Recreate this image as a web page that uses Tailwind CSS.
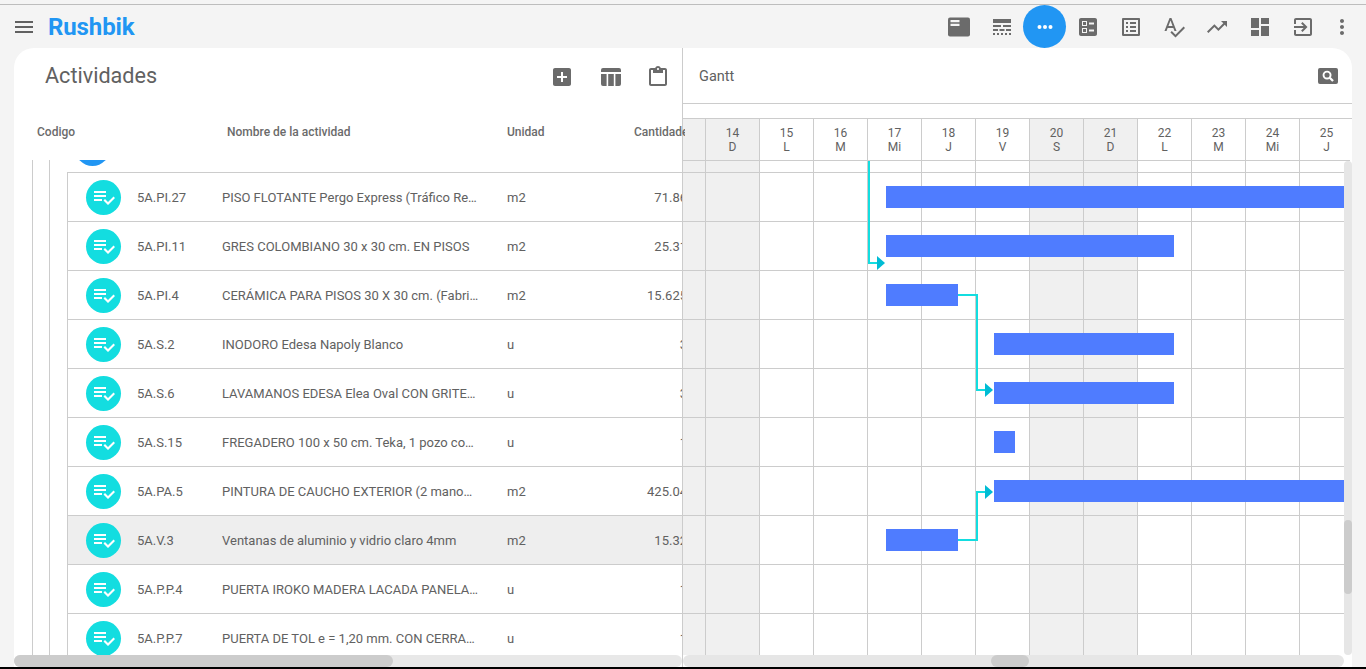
<!DOCTYPE html>
<html lang="es">
<head>
<meta charset="utf-8">
<title>Rushbik</title>
<script src="https://cdn.jsdelivr.net/npm/@tailwindcss/browser@4"></script>
</head>
<body class="w-[1366px] h-[669px] overflow-hidden bg-[#f4f4f4] font-['Roboto',sans-serif] text-[#616161] flex flex-col">
<div class="h-[5px] shrink-0 border-b border-[#bdbdbd]"></div>
<header class="h-[43px] shrink-0 flex items-center">
  <svg class="ml-3 w-6 h-6 fill-[#616161]" viewBox="0 0 24 24"><path d="M3 18h18v-2H3v2zm0-5h18v-2H3v2zm0-7v2h18V6H3z"/></svg>
  <div class="ml-3 text-[24px] leading-none font-bold text-[#2196f3] tracking-[-0.1px]">Rushbik</div>
  <div class="ml-auto flex items-center h-full pr-[8px]">
    <div class="w-[43px] h-[43px] flex items-center justify-center"><svg class="w-6 h-6" viewBox="0 0 24 24"><rect x="1" y="2.5" width="22" height="19" rx="2" fill="#6b6b6b"/><path d="M3.5 5h9v2.2h-9zM3.5 8.7h9v2.2h-9z" fill="#f4f4f4"/></svg></div>
    <div class="w-[43px] h-[43px] flex items-center justify-center"><svg class="w-6 h-6 fill-[#6b6b6b]" viewBox="0 0 24 24"><path d="M3 16h5v-2H3v2zm6.5 0h5v-2h-5v2zm6.5 0h5v-2h-5v2zM3 20h2v-2H3v2zm4 0h2v-2H7v2zm4 0h2v-2h-2v2zm4 0h2v-2h-2v2zm4 0h2v-2h-2v2zM3 12h8v-2H3v2zm10 0h8v-2h-8v2zM3 4v4h18V4H3z"/></svg></div>
    <div class="w-[43px] h-[43px] rounded-full bg-[#2196f3] flex items-center justify-center"><svg class="w-6 h-6 fill-white" viewBox="0 0 24 24"><circle cx="6.5" cy="12" r="2"/><circle cx="12" cy="12" r="2"/><circle cx="17.5" cy="12" r="2"/></svg></div>
    <div class="w-[43px] h-[43px] flex items-center justify-center"><svg class="w-6 h-6 fill-[#6b6b6b]" viewBox="0 0 24 24"><path d="M13 9.5h5v-2h-5v2zm0 7h5v-2h-5v2zm6 4.5H5c-1.1 0-2-.9-2-2V5c0-1.1.9-2 2-2h14c1.1 0 2 .9 2 2v14c0 1.1-.9 2-2 2zM6 11h5V6H6v5zm1-4h3v3H7V7zM6 18h5v-5H6v5zm1-4h3v3H7v-3z"/></svg></div>
    <div class="w-[43px] h-[43px] flex items-center justify-center"><svg class="w-6 h-6 fill-[#6b6b6b]" viewBox="0 0 24 24"><path d="M19 5v14H5V5h14m1.1-2H3.9c-.5 0-.9.4-.9.9v16.2c0 .4.4.9.9.9h16.2c.4 0 .9-.5.9-.9V3.9c0-.5-.5-.9-.9-.9zM11 7h6v2h-6V7zm0 4h6v2h-6v-2zm0 4h6v2h-6zM7 7h2v2H7zm0 4h2v2H7zm0 4h2v2H7z"/></svg></div>
    <div class="w-[43px] h-[43px] flex items-center justify-center"><svg class="w-6 h-6 fill-[#6b6b6b]" viewBox="0 0 24 24"><path d="M12.45 16h2.09L9.43 3H7.57L2.46 16h2.09l1.12-3h5.64l1.14 3zm-6.02-5L8.5 5.48 10.57 11H6.43zm15.16.59l-8.09 8.09L9.83 16l-1.41 1.41 5.09 5.09L23 13l-1.41-1.41z"/></svg></div>
    <div class="w-[43px] h-[43px] flex items-center justify-center"><svg class="w-6 h-6 fill-[#6b6b6b]" viewBox="0 0 24 24"><path d="M16 6l2.29 2.29-4.88 4.88-4-4L2 16.59 3.41 18l6-6 4 4 6.3-6.29L22 12V6z"/></svg></div>
    <div class="w-[43px] h-[43px] flex items-center justify-center"><svg class="w-6 h-6 fill-[#6b6b6b]" viewBox="0 0 24 24"><path d="M3 13h8V3H3v10zm0 8h8v-6H3v6zm10 0h8V11h-8v10zm0-18v6h8V3h-8z"/></svg></div>
    <div class="w-[43px] h-[43px] flex items-center justify-center"><svg class="w-6 h-6 fill-[#6b6b6b]" viewBox="0 0 24 24"><path d="M10.09 15.59L11.5 17l5-5-5-5-1.41 1.41L12.67 11H3v2h9.67l-2.58 2.59zM19 3H5c-1.11 0-2 .9-2 2v4h2V5h14v14H5v-4H3v4c0 1.1.89 2 2 2h14c1.1 0 2-.9 2-2V5c0-1.1-.9-2-2-2z"/></svg></div>
    <div class="w-[34px] h-[43px] pl-[2px] flex items-center justify-center"><svg class="w-6 h-6 fill-[#6b6b6b]" viewBox="0 0 24 24"><path d="M12 8c1.1 0 2-.9 2-2s-.9-2-2-2-2 .9-2 2 .9 2 2 2zm0 2c-1.1 0-2 .9-2 2s.9 2 2 2 2-.9 2-2-.9-2-2-2zm0 6c-1.1 0-2 .9-2 2s.9 2 2 2 2-.9 2-2-.9-2-2-2z"/></svg></div>
  </div>
</header>

<main class="mx-[14px] h-[619px] shrink-0 bg-white rounded-t-[20px] flex">
  <section class="w-[668px] shrink-0 flex flex-col relative z-10">
    <div class="h-[112px] shrink-0 w-[671px] overflow-hidden">
      <div class="h-[57px] flex items-center pl-[31px]">
        <h1 class="text-[21.6px] leading-none font-normal text-[#616161] pb-[2px]">Actividades</h1>
        <div class="ml-auto flex items-center mr-[15px]">
          <svg class="w-6 h-6 fill-[#6b6b6b]" viewBox="0 0 24 24"><path d="M19 3H5c-1.11 0-2 .9-2 2v14c0 1.1.89 2 2 2h14c1.1 0 2-.9 2-2V5c0-1.1-.9-2-2-2zm-2 10h-4v4h-2v-4H7v-2h4V7h2v4h4v2z"/></svg>
          <svg class="ml-[25px] w-6 h-6 fill-[#6b6b6b]" viewBox="0 0 24 24"><path d="M2 5a2 2 0 0 1 2-2h16a2 2 0 0 1 2 2v2H2zM2 9h5.6v12H4a2 2 0 0 1-2-2zM9.2 9h5.6v12H9.2zM16.4 9H22v10a2 2 0 0 1-2 2h-3.6z"/></svg>
          <svg class="ml-[23px] w-6 h-6 fill-[#6b6b6b]" viewBox="0 0 24 24"><path d="M19 3h-4.18C14.4 1.84 13.3 1 12 1c-1.3 0-2.4.84-2.82 2H5c-1.1 0-2 .9-2 2v14c0 1.1.9 2 2 2h14c1.1 0 2-.9 2-2V5c0-1.1-.9-2-2-2zm-7 0c.55 0 1 .45 1 1s-.45 1-1 1-1-.45-1-1 .45-1 1-1zm7 16H5V5h2v3h10V5h2v14z"/></svg>
        </div>
      </div>
      <div class="h-[55px] flex items-start pt-[20px] text-[12px] leading-[14px] font-medium text-[#6b6b6b] whitespace-nowrap">
        <div class="ml-[23px] w-[190px] shrink-0">Codigo</div>
        <div class="w-[280px] shrink-0">Nombre de la actividad</div>
        <div class="w-[127px] shrink-0">Unidad</div>
        <div class="shrink-0">Cantidades</div>
      </div>
    </div>
    <div class="h-[495px] shrink-0 overflow-hidden">
      <div class="ml-[18px] h-full border-l border-[#ccc] pl-[16px]">
        <div class="h-full border-l border-[#ccc] pl-[17px]">
          <div class="h-[12px] overflow-hidden">
            <div class="ml-[8px] -mt-[29px] w-[35px] h-[35px] rounded-full bg-[#2196f3]"></div>
          </div>
          <div class="w-[640px] border-l border-t border-[#ccc] text-[13px] text-[#616161] whitespace-nowrap">
            <div class="h-[49px] border-b border-[#ccc] flex items-center">
              <span class="ml-[18px] w-[35px] h-[35px] rounded-full bg-[#13dde0] flex items-center justify-center shrink-0"><svg class="w-6 h-6 fill-white" viewBox="0 0 24 24"><path d="M14 10H2v2h12v-2zm0-4H2v2h12V6zM2 16h8v-2H2v2zm19.5-4.5L23 13l-6.99 7-4.51-4.5L13 14l3.01 3 5.49-5.5z"/></svg></span>
              <span class="pt-[2px] ml-4 w-[85px] shrink-0">5A.PI.27</span><span class="pt-[2px] w-[285px] shrink-0">PISO FLOTANTE Pergo Express (Tráfico Re…</span><span class="pt-[2px] w-[100px] shrink-0">m2</span><span class="pt-[2px] w-[80px] shrink-0 text-right">71.86</span>
            </div>
            <div class="h-[49px] border-b border-[#ccc] flex items-center">
              <span class="ml-[18px] w-[35px] h-[35px] rounded-full bg-[#13dde0] flex items-center justify-center shrink-0"><svg class="w-6 h-6 fill-white" viewBox="0 0 24 24"><path d="M14 10H2v2h12v-2zm0-4H2v2h12V6zM2 16h8v-2H2v2zm19.5-4.5L23 13l-6.99 7-4.51-4.5L13 14l3.01 3 5.49-5.5z"/></svg></span>
              <span class="pt-[2px] ml-4 w-[85px] shrink-0">5A.PI.11</span><span class="pt-[2px] w-[285px] shrink-0">GRES COLOMBIANO 30 x 30 cm. EN PISOS</span><span class="pt-[2px] w-[100px] shrink-0">m2</span><span class="pt-[2px] w-[80px] shrink-0 text-right">25.31</span>
            </div>
            <div class="h-[49px] border-b border-[#ccc] flex items-center">
              <span class="ml-[18px] w-[35px] h-[35px] rounded-full bg-[#13dde0] flex items-center justify-center shrink-0"><svg class="w-6 h-6 fill-white" viewBox="0 0 24 24"><path d="M14 10H2v2h12v-2zm0-4H2v2h12V6zM2 16h8v-2H2v2zm19.5-4.5L23 13l-6.99 7-4.51-4.5L13 14l3.01 3 5.49-5.5z"/></svg></span>
              <span class="pt-[2px] ml-4 w-[85px] shrink-0">5A.PI.4</span><span class="pt-[2px] w-[285px] shrink-0">CERÁMICA PARA PISOS 30 X 30 cm. (Fabri…</span><span class="pt-[2px] w-[100px] shrink-0">m2</span><span class="pt-[2px] w-[80px] shrink-0 text-right">15.625</span>
            </div>
            <div class="h-[49px] border-b border-[#ccc] flex items-center">
              <span class="ml-[18px] w-[35px] h-[35px] rounded-full bg-[#13dde0] flex items-center justify-center shrink-0"><svg class="w-6 h-6 fill-white" viewBox="0 0 24 24"><path d="M14 10H2v2h12v-2zm0-4H2v2h12V6zM2 16h8v-2H2v2zm19.5-4.5L23 13l-6.99 7-4.51-4.5L13 14l3.01 3 5.49-5.5z"/></svg></span>
              <span class="pt-[2px] ml-4 w-[85px] shrink-0">5A.S.2</span><span class="pt-[2px] w-[285px] shrink-0">INODORO Edesa Napoly Blanco</span><span class="pt-[2px] w-[100px] shrink-0">u</span><span class="pt-[2px] w-[80px] shrink-0 text-right">3</span>
            </div>
            <div class="h-[49px] border-b border-[#ccc] flex items-center">
              <span class="ml-[18px] w-[35px] h-[35px] rounded-full bg-[#13dde0] flex items-center justify-center shrink-0"><svg class="w-6 h-6 fill-white" viewBox="0 0 24 24"><path d="M14 10H2v2h12v-2zm0-4H2v2h12V6zM2 16h8v-2H2v2zm19.5-4.5L23 13l-6.99 7-4.51-4.5L13 14l3.01 3 5.49-5.5z"/></svg></span>
              <span class="pt-[2px] ml-4 w-[85px] shrink-0">5A.S.6</span><span class="pt-[2px] w-[285px] shrink-0">LAVAMANOS EDESA Elea Oval CON GRITE…</span><span class="pt-[2px] w-[100px] shrink-0">u</span><span class="pt-[2px] w-[80px] shrink-0 text-right">3</span>
            </div>
            <div class="h-[49px] border-b border-[#ccc] flex items-center">
              <span class="ml-[18px] w-[35px] h-[35px] rounded-full bg-[#13dde0] flex items-center justify-center shrink-0"><svg class="w-6 h-6 fill-white" viewBox="0 0 24 24"><path d="M14 10H2v2h12v-2zm0-4H2v2h12V6zM2 16h8v-2H2v2zm19.5-4.5L23 13l-6.99 7-4.51-4.5L13 14l3.01 3 5.49-5.5z"/></svg></span>
              <span class="pt-[2px] ml-4 w-[85px] shrink-0">5A.S.15</span><span class="pt-[2px] w-[285px] shrink-0">FREGADERO 100 x 50 cm. Teka, 1 pozo co…</span><span class="pt-[2px] w-[100px] shrink-0">u</span><span class="pt-[2px] w-[80px] shrink-0 text-right">1</span>
            </div>
            <div class="h-[49px] border-b border-[#ccc] flex items-center">
              <span class="ml-[18px] w-[35px] h-[35px] rounded-full bg-[#13dde0] flex items-center justify-center shrink-0"><svg class="w-6 h-6 fill-white" viewBox="0 0 24 24"><path d="M14 10H2v2h12v-2zm0-4H2v2h12V6zM2 16h8v-2H2v2zm19.5-4.5L23 13l-6.99 7-4.51-4.5L13 14l3.01 3 5.49-5.5z"/></svg></span>
              <span class="pt-[2px] ml-4 w-[85px] shrink-0">5A.PA.5</span><span class="pt-[2px] w-[285px] shrink-0">PINTURA DE CAUCHO EXTERIOR (2 mano…</span><span class="pt-[2px] w-[100px] shrink-0">m2</span><span class="pt-[2px] w-[80px] shrink-0 text-right">425.04</span>
            </div>
            <div class="h-[49px] border-b border-[#ccc] flex items-center bg-[#eeeeee]">
              <span class="ml-[18px] w-[35px] h-[35px] rounded-full bg-[#13dde0] flex items-center justify-center shrink-0"><svg class="w-6 h-6 fill-white" viewBox="0 0 24 24"><path d="M14 10H2v2h12v-2zm0-4H2v2h12V6zM2 16h8v-2H2v2zm19.5-4.5L23 13l-6.99 7-4.51-4.5L13 14l3.01 3 5.49-5.5z"/></svg></span>
              <span class="pt-[2px] ml-4 w-[85px] shrink-0">5A.V.3</span><span class="pt-[2px] w-[285px] shrink-0">Ventanas de aluminio y vidrio claro 4mm</span><span class="pt-[2px] w-[100px] shrink-0">m2</span><span class="pt-[2px] w-[80px] shrink-0 text-right">15.32</span>
            </div>
            <div class="h-[49px] border-b border-[#ccc] flex items-center">
              <span class="ml-[18px] w-[35px] h-[35px] rounded-full bg-[#13dde0] flex items-center justify-center shrink-0"><svg class="w-6 h-6 fill-white" viewBox="0 0 24 24"><path d="M14 10H2v2h12v-2zm0-4H2v2h12V6zM2 16h8v-2H2v2zm19.5-4.5L23 13l-6.99 7-4.51-4.5L13 14l3.01 3 5.49-5.5z"/></svg></span>
              <span class="pt-[2px] ml-4 w-[85px] shrink-0">5A.P.P.4</span><span class="pt-[2px] w-[285px] shrink-0">PUERTA IROKO MADERA LACADA PANELA…</span><span class="pt-[2px] w-[100px] shrink-0">u</span><span class="pt-[2px] w-[80px] shrink-0 text-right">1</span>
            </div>
            <div class="h-[49px] border-b border-[#ccc] flex items-center">
              <span class="ml-[18px] w-[35px] h-[35px] rounded-full bg-[#13dde0] flex items-center justify-center shrink-0"><svg class="w-6 h-6 fill-white" viewBox="0 0 24 24"><path d="M14 10H2v2h12v-2zm0-4H2v2h12V6zM2 16h8v-2H2v2zm19.5-4.5L23 13l-6.99 7-4.51-4.5L13 14l3.01 3 5.49-5.5z"/></svg></span>
              <span class="pt-[2px] ml-4 w-[85px] shrink-0">5A.P.P.7</span><span class="pt-[2px] w-[285px] shrink-0">PUERTA DE TOL e = 1,20 mm. CON CERRA…</span><span class="pt-[2px] w-[100px] shrink-0">u</span><span class="pt-[2px] w-[80px] shrink-0 text-right">1</span>
            </div>
          </div>
        </div>
      </div>
    </div>
    <div class="h-3 shrink-0 bg-[#e8e8e8] rounded-full"><div class="w-[379px] h-full rounded-full bg-[#cccccc]"></div></div>
  </section>

  <section class="w-[670px] shrink-0 border-l border-[#ccc] flex flex-col">
    <div class="h-[56px] shrink-0 border-b border-[#ccc] flex items-center pl-4 pr-[14px] text-[14.5px]">
      <span class="pt-[2px]">Gantt</span>
      <svg class="ml-auto w-[20px] h-[16px]" viewBox="0 0 21 17" preserveAspectRatio="none"><rect width="21" height="17" rx="2" fill="#6b6b6b"/><circle cx="9.5" cy="7.5" r="3.7" fill="none" stroke="#fff" stroke-width="2"/><path d="M12.3 10.3l3.5 3.5" stroke="#fff" stroke-width="2.4"/></svg>
    </div>
    <div class="h-[15px] shrink-0 border-b border-[#ccc]"></div>
    <div class="h-[42px] shrink-0 w-[667px] border-b border-[#ccc] overflow-hidden flex text-[12px] leading-[14px] text-center text-[#616161]">
      <div class="w-[23px] shrink-0 border-r border-[#ccc] bg-[#f0f0f0]"></div>
      <div class="w-[54px] shrink-0 border-r border-[#ccc] bg-[#f0f0f0] pt-[7px]">14<br>D</div>
      <div class="w-[54px] shrink-0 border-r border-[#ccc] pt-[7px]">15<br>L</div>
      <div class="w-[54px] shrink-0 border-r border-[#ccc] pt-[7px]">16<br>M</div>
      <div class="w-[54px] shrink-0 border-r border-[#ccc] pt-[7px]">17<br>Mi</div>
      <div class="w-[54px] shrink-0 border-r border-[#ccc] pt-[7px]">18<br>J</div>
      <div class="w-[54px] shrink-0 border-r border-[#ccc] pt-[7px]">19<br>V</div>
      <div class="w-[54px] shrink-0 border-r border-[#ccc] bg-[#f0f0f0] pt-[7px]">20<br>S</div>
      <div class="w-[54px] shrink-0 border-r border-[#ccc] bg-[#f0f0f0] pt-[7px]">21<br>D</div>
      <div class="w-[54px] shrink-0 border-r border-[#ccc] pt-[7px]">22<br>L</div>
      <div class="w-[54px] shrink-0 border-r border-[#ccc] pt-[7px]">23<br>M</div>
      <div class="w-[54px] shrink-0 border-r border-[#ccc] pt-[7px]">24<br>Mi</div>
      <div class="w-[54px] shrink-0 border-r border-[#ccc] pt-[7px]">25<br>J</div>
    </div>
    <div class="flex h-[494px] shrink-0">
      <div class="relative w-[661px] h-full overflow-hidden">
        <div class="absolute inset-0 flex">
          <div class="w-[23px] shrink-0 border-r border-[#ccc] bg-[#f0f0f0]"></div>
          <div class="w-[54px] shrink-0 border-r border-[#ccc] bg-[#f0f0f0]"></div>
          <div class="w-[54px] shrink-0 border-r border-[#ccc]"></div>
          <div class="w-[54px] shrink-0 border-r border-[#ccc]"></div>
          <div class="w-[54px] shrink-0 border-r border-[#ccc]"></div>
          <div class="w-[54px] shrink-0 border-r border-[#ccc]"></div>
          <div class="w-[54px] shrink-0 border-r border-[#ccc]"></div>
          <div class="w-[54px] shrink-0 border-r border-[#ccc] bg-[#f0f0f0]"></div>
          <div class="w-[54px] shrink-0 border-r border-[#ccc] bg-[#f0f0f0]"></div>
          <div class="w-[54px] shrink-0 border-r border-[#ccc]"></div>
          <div class="w-[54px] shrink-0 border-r border-[#ccc]"></div>
          <div class="w-[54px] shrink-0 border-r border-[#ccc]"></div>
          <div class="w-[54px] shrink-0 border-r border-[#ccc]"></div>
        </div>
        <div class="relative">
          <div class="h-[12px] border-b border-[#ccc]"></div>
          <div class="h-[49px] border-b border-[#ccc] flex items-center"><div class="ml-[203px] w-[458px] h-[22px] bg-[#4f7cff]"></div></div>
          <div class="h-[49px] border-b border-[#ccc] flex items-center"><div class="ml-[203px] w-[288px] h-[22px] bg-[#4f7cff]"></div></div>
          <div class="h-[49px] border-b border-[#ccc] flex items-center"><div class="ml-[203px] w-[72px] h-[22px] bg-[#4f7cff]"></div></div>
          <div class="h-[49px] border-b border-[#ccc] flex items-center"><div class="ml-[311px] w-[180px] h-[22px] bg-[#4f7cff]"></div></div>
          <div class="h-[49px] border-b border-[#ccc] flex items-center"><div class="ml-[311px] w-[180px] h-[22px] bg-[#4f7cff]"></div></div>
          <div class="h-[49px] border-b border-[#ccc] flex items-center"><div class="ml-[311px] w-[21px] h-[22px] bg-[#4f7cff]"></div></div>
          <div class="h-[49px] border-b border-[#ccc] flex items-center"><div class="ml-[311px] w-[350px] h-[22px] bg-[#4f7cff]"></div></div>
          <div class="h-[49px] border-b border-[#ccc] flex items-center"><div class="ml-[203px] w-[72px] h-[22px] bg-[#4f7cff]"></div></div>
          <div class="h-[49px] border-b border-[#ccc]"></div>
          <div class="h-[49px] border-b border-[#ccc]"></div>
          <div class="h-[49px]"></div>
        </div>
        <svg class="absolute left-0 top-0 w-[661px] h-[494px]" viewBox="0 0 661 494" fill="none">
          <path d="M186 0V102H194" stroke="#13dde0" stroke-width="2"/>
          <path d="M194 95L202 102L194 109Z" fill="#00bcd4"/>
          <path d="M275 134H294V229H302" stroke="#13dde0" stroke-width="2"/>
          <path d="M302 222L310 229L302 236Z" fill="#00bcd4"/>
          <path d="M275 379H294V331H302" stroke="#13dde0" stroke-width="2"/>
          <path d="M302 324L310 331L302 338Z" fill="#00bcd4"/>
        </svg>
      </div>
      <div class="w-2 h-full bg-[#e6e6e6] rounded-full">
        <div class="mt-[359px] h-[74px] rounded-full bg-[#cccccc]"></div>
      </div>
    </div>
    <div class="h-3 shrink-0 w-[661px] bg-[#e6e6e6] rounded-full">
      <div class="ml-[308px] w-[38px] h-full rounded-full bg-[#cccccc]"></div>
    </div>
  </section>
</main>
<div class="h-[2px] shrink-0 bg-black"></div>
</body>
</html>
